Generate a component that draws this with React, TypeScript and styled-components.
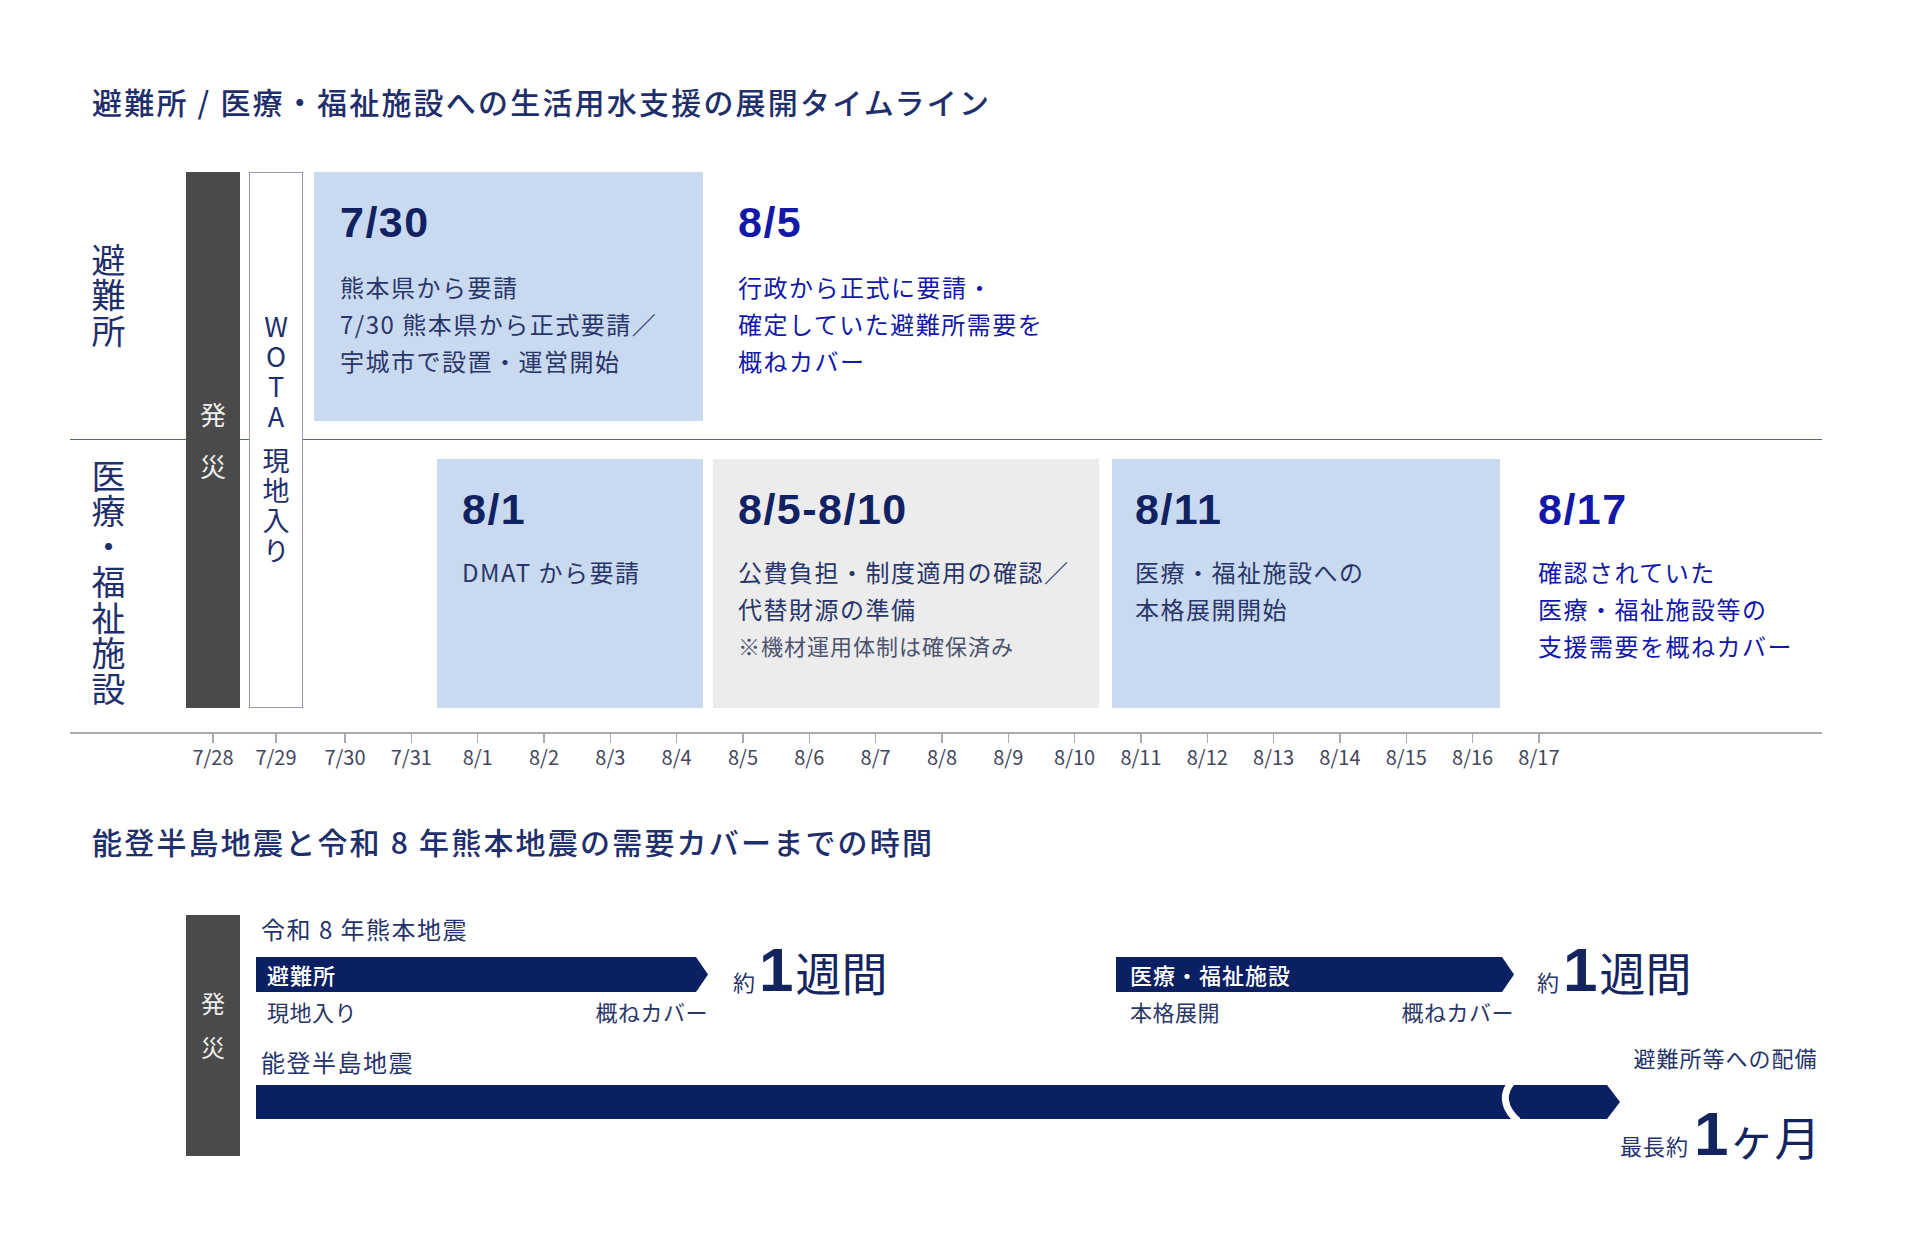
import React from "react";
import styled, { createGlobalStyle } from "styled-components";

const CJK = `"Noto Sans CJK JP", "Noto Sans", sans-serif`;
const LATIN_BOLD = `"Liberation Sans", Arial, sans-serif`;
const NAVY_BAR = "#0b1f63";
const NAVY_TEXT = "#1f2e68";
const BLUE_TEXT = "#1218a8";

const GlobalStyle = createGlobalStyle`
  html, body { margin: 0; padding: 0; background: #ffffff; }
  body { font-family: ${CJK}; color: ${NAVY_TEXT}; }
  #root { width: 1920px; height: 1251px; }
`;

const Page = styled.div`
  width: 1920px;
  height: 1251px;
  box-sizing: border-box;
  padding-top: 80px;
  overflow: hidden;
  background: #ffffff;
`;

const SectionTitle = styled.h2<{ $top: number }>`
  margin: ${(p) => p.$top}px 0 0 92px;
  font-family: ${CJK};
  font-size: 30px;
  line-height: 42px;
  font-weight: 500;
  letter-spacing: 2.2px;
  color: #1f2f6b;
  white-space: nowrap;
`;

/* ---------- Timeline chart ---------- */

const ChartGrid = styled.div`
  margin: 50px 0 0 70px;
  width: 1752px;
  display: grid;
  grid-template-columns: 116px 54px 9px 54px 11px 123px 266px 10px 386px 13px 388px 322px;
  grid-template-rows: 249px 18px 1px 19px 249px;
`;

const RowLabel = styled.div<{ $row: string }>`
  grid-column: 1 / 2;
  grid-row: ${(p) => p.$row};
  align-self: center;
  justify-self: start;
  margin-left: 21px;
  writing-mode: vertical-rl;
  text-orientation: upright;
  font-size: 34px;
  line-height: 34px;
  letter-spacing: 1.5px;
  color: #1f2f6b;
`;

const Divider = styled.div`
  grid-column: 1 / -1;
  grid-row: 3 / 4;
  background: #5d6391;
  height: 1px;
`;

const DisasterBar = styled.div<{ $pad?: number; $gap: number; $size: number }>`
  position: relative;
  z-index: 1;
  background: #4a4a4a;
  color: #eeeeee;
  display: flex;
  flex-direction: column;
  align-items: center;
  justify-content: center;
  gap: ${(p) => p.$gap}px;
  padding-bottom: ${(p) => p.$pad ?? 0}px;
  box-sizing: border-box;
  font-size: ${(p) => p.$size}px;
  line-height: ${(p) => p.$size}px;
`;

const TopDisasterBar = styled(DisasterBar)`
  grid-column: 2 / 3;
  grid-row: 1 / 6;
`;

const WotaBox = styled.div`
  position: relative;
  z-index: 1;
  grid-column: 4 / 5;
  grid-row: 1 / 6;
  background: #ffffff;
  border: 1.5px solid #9599b8;
  box-sizing: border-box;
  display: flex;
  flex-direction: column;
  align-items: center;
  justify-content: center;
  gap: 14px;
`;

const WotaText = styled.span<{ $pitch: number }>`
  writing-mode: vertical-rl;
  text-orientation: upright;
  font-size: 27px;
  line-height: 27px;
  letter-spacing: ${(p) => p.$pitch}px;
  color: #1f2f6b;
`;

type Tone = "blue" | "gray" | "plain";

const EventBox = styled.div<{ $col: string; $row: string; $tone: Tone; $padLeft: number }>`
  grid-column: ${(p) => p.$col};
  grid-row: ${(p) => p.$row};
  background: ${(p) => (p.$tone === "blue" ? "#c9d9ef" : p.$tone === "gray" ? "#ececec" : "transparent")};
  padding: 29px 0 0 ${(p) => p.$padLeft}px;
  box-sizing: border-box;
  white-space: nowrap;
`;

const EventDate = styled.div<{ $accent?: boolean }>`
  font-family: ${LATIN_BOLD};
  font-weight: 700;
  font-size: 43px;
  line-height: 43px;
  letter-spacing: 1.5px;
  color: ${(p) => (p.$accent ? BLUE_TEXT : "#102262")};
`;

const EventBody = styled.div<{ $accent?: boolean; $top: number }>`
  margin-top: ${(p) => p.$top}px;
  font-size: 24px;
  line-height: 37px;
  letter-spacing: 1.5px;
  color: ${(p) => (p.$accent ? BLUE_TEXT : "#29366a")};
`;

const EventNote = styled.div`
  margin-top: 3px;
  font-size: 22px;
  line-height: 30px;
  letter-spacing: 1px;
  color: #4d5370;
`;

const Axis = styled.div`
  position: relative;
  margin: 24px 0 0 70px;
  width: 1752px;
  height: 50px;
  border-top: 2px solid #a8a9b3;
`;

const Tick = styled.div`
  position: absolute;
  top: 0;
  width: 1.5px;
  height: 9px;
  background: #a8a9b3;
`;

const TickLabel = styled.div`
  position: absolute;
  top: 11px;
  transform: translateX(-50%);
  font-size: 20px;
  line-height: 24px;
  color: #43475e;
  white-space: nowrap;
`;

/* ---------- Comparison section ---------- */

const CompareGrid = styled.div`
  margin: 50px 0 0 186px;
  display: grid;
  grid-template-columns: 54px 16px 1566px;
`;

const CompareDisasterBar = styled(DisasterBar)`
  grid-column: 1 / 2;
  align-self: start;
  margin-top: 3px;
  height: 241px;
`;

const CompareContent = styled.div`
  grid-column: 3 / 4;
  display: flex;
  flex-direction: column;
`;

const QuakeLabel = styled.div<{ $top?: number }>`
  margin-top: ${(p) => p.$top ?? 0}px;
  padding-left: 5px;
  font-size: 24px;
  line-height: 34px;
  letter-spacing: 1.5px;
  color: #25336a;
  white-space: nowrap;
`;

const RowA = styled.div`
  margin-top: 11px;
  display: grid;
  grid-template-columns: 452px 408px 398px 1fr;
  align-items: start;
`;

const ArrowGroup = styled.div`
  display: flex;
  flex-direction: column;
`;

const ArrowBar = styled.div<{ $pad: number }>`
  height: 35px;
  background: ${NAVY_BAR};
  clip-path: polygon(0 0, calc(100% - 12px) 0, 100% 50%, calc(100% - 12px) 100%, 0 100%);
  color: #ffffff;
  font-size: 22px;
  line-height: 35px;
  font-weight: 500;
  letter-spacing: 1px;
  padding-left: ${(p) => p.$pad}px;
  white-space: nowrap;
`;

const SubLabels = styled.div<{ $pad: number }>`
  margin-top: 4px;
  display: flex;
  justify-content: space-between;
  padding-left: ${(p) => p.$pad}px;
  font-size: 22px;
  line-height: 30px;
  letter-spacing: 0.5px;
  color: #2a3668;
  white-space: nowrap;
`;

const ValueCell = styled.div<{ $pad: number }>`
  padding-left: ${(p) => p.$pad}px;
  margin-top: -18px;
`;

const Value = styled.div<{ $top?: number }>`
  display: flex;
  align-items: baseline;
  margin-top: ${(p) => p.$top ?? 0}px;
  font-family: ${LATIN_BOLD};
  font-size: 62px;
  line-height: 62px;
  color: #14245e;
  white-space: nowrap;
`;

const ValueSmall = styled.span`
  font-family: ${CJK};
  font-size: 22px;
  line-height: 22px;
  letter-spacing: 1px;
  color: #25336a;
`;

const ValueBig = styled.span<{ $gap: number }>`
  margin-left: ${(p) => p.$gap}px;
  font-family: ${LATIN_BOLD};
  font-weight: 700;
  font-size: 62px;
  line-height: 62px;
`;

const ValueUnit = styled.span<{ $gap: number }>`
  margin-left: ${(p) => p.$gap}px;
  font-family: ${CJK};
  font-size: 46px;
  line-height: 46px;
`;

const RowB = styled.div`
  margin-top: 16px;
  display: grid;
  grid-template-columns: 1364px 1fr;
  align-items: start;
`;

const LongBarCell = styled.div`
  display: flex;
  flex-direction: column;
`;

const LongBarSvg = styled.svg`
  display: block;
  margin-top: 6px;
`;

const RightNote = styled.div`
  display: flex;
  flex-direction: column;
  align-items: flex-end;
  padding-right: 8px;
`;

const DeployLabel = styled.div`
  font-size: 22px;
  line-height: 30px;
  letter-spacing: 1px;
  color: #25336a;
  white-space: nowrap;
`;

const MonthValue = styled(Value)`
  margin-right: -3px;
`;

/* ---------- Data ---------- */

const dayLabels = [
  "7/30", "7/31", "8/1", "8/2", "8/3", "8/4", "8/5", "8/6", "8/7", "8/8",
  "8/9", "8/10", "8/11", "8/12", "8/13", "8/14", "8/15", "8/16", "8/17",
];

const ticks = [
  { label: "7/28", x: 213 },
  { label: "7/29", x: 276 },
  ...dayLabels.map((label, i) => ({ label, x: 345 + i * 66.33 })),
];

const AXIS_LEFT = 70;

const LongBar: React.FC = () => (
  <LongBarSvg width={1364} height={34} viewBox="0 0 1364 34">
    <path d="M0 0 H1351 L1364 17 L1351 34 H0 Z" fill={NAVY_BAR} />
    <path d="M1255 -2 C1247 8 1246 22 1262 36" stroke="#ffffff" strokeWidth={7} fill="none" />
  </LongBarSvg>
);

export default function App() {
  return (
    <Page>
      <GlobalStyle />
      <SectionTitle $top={0}>避難所 / 医療・福祉施設への生活用水支援の展開タイムライン</SectionTitle>

      <ChartGrid>
        <RowLabel $row="1 / 2">避難所</RowLabel>
        <RowLabel $row="5 / 6">医療・福祉施設</RowLabel>
        <Divider />
        <TopDisasterBar $gap={26} $size={26}>
          <span>発</span>
          <span>災</span>
        </TopDisasterBar>
        <WotaBox>
          <WotaText $pitch={3}>WOTA</WotaText>
          <WotaText $pitch={3}>現地入り</WotaText>
        </WotaBox>

        <EventBox $col="6 / 8" $row="1 / 2" $tone="blue" $padLeft={26}>
          <EventDate>7/30</EventDate>
          <EventBody $top={24}>
            熊本県から要請
            <br />
            7/30 熊本県から正式要請／
            <br />
            宇城市で設置・運営開始
          </EventBody>
        </EventBox>

        <EventBox $col="8 / 13" $row="1 / 2" $tone="plain" $padLeft={35}>
          <EventDate $accent>8/5</EventDate>
          <EventBody $accent $top={24}>
            行政から正式に要請・
            <br />
            確定していた避難所需要を
            <br />
            概ねカバー
          </EventBody>
        </EventBox>

        <EventBox $col="7 / 8" $row="5 / 6" $tone="blue" $padLeft={25}>
          <EventDate>8/1</EventDate>
          <EventBody $top={22}>DMAT から要請</EventBody>
        </EventBox>

        <EventBox $col="9 / 10" $row="5 / 6" $tone="gray" $padLeft={25}>
          <EventDate>8/5-8/10</EventDate>
          <EventBody $top={22}>
            公費負担・制度適用の確認／
            <br />
            代替財源の準備
          </EventBody>
          <EventNote>※機材運用体制は確保済み</EventNote>
        </EventBox>

        <EventBox $col="11 / 12" $row="5 / 6" $tone="blue" $padLeft={23}>
          <EventDate>8/11</EventDate>
          <EventBody $top={22}>
            医療・福祉施設への
            <br />
            本格展開開始
          </EventBody>
        </EventBox>

        <EventBox $col="12 / 13" $row="5 / 6" $tone="plain" $padLeft={38}>
          <EventDate $accent>8/17</EventDate>
          <EventBody $accent $top={22}>
            確認されていた
            <br />
            医療・福祉施設等の
            <br />
            支援需要を概ねカバー
          </EventBody>
        </EventBox>
      </ChartGrid>

      <Axis>
        {ticks.map((t) => (
          <React.Fragment key={t.label}>
            <Tick style={{ left: t.x - AXIS_LEFT - 0.75 }} />
            <TickLabel style={{ left: t.x - AXIS_LEFT }}>{t.label}</TickLabel>
          </React.Fragment>
        ))}
      </Axis>

      <SectionTitle $top={36}>能登半島地震と令和 8 年熊本地震の需要カバーまでの時間</SectionTitle>

      <CompareGrid>
        <CompareDisasterBar $gap={20} $size={24} $pad={22}>
          <span>発</span>
          <span>災</span>
        </CompareDisasterBar>

        <CompareContent>
          <QuakeLabel>令和 8 年熊本地震</QuakeLabel>
          <RowA>
            <ArrowGroup>
              <ArrowBar $pad={11}>避難所</ArrowBar>
              <SubLabels $pad={11}>
                <span>現地入り</span>
                <span>概ねカバー</span>
              </SubLabels>
            </ArrowGroup>
            <ValueCell $pad={25}>
              <Value>
                <ValueSmall>約</ValueSmall>
                <ValueBig $gap={3}>1</ValueBig>
                <ValueUnit $gap={2}>週間</ValueUnit>
              </Value>
            </ValueCell>
            <ArrowGroup>
              <ArrowBar $pad={14}>医療・福祉施設</ArrowBar>
              <SubLabels $pad={14}>
                <span>本格展開</span>
                <span>概ねカバー</span>
              </SubLabels>
            </ArrowGroup>
            <ValueCell $pad={23}>
              <Value>
                <ValueSmall>約</ValueSmall>
                <ValueBig $gap={3}>1</ValueBig>
                <ValueUnit $gap={2}>週間</ValueUnit>
              </Value>
            </ValueCell>
          </RowA>

          <RowB>
            <LongBarCell>
              <QuakeLabel $top={3}>能登半島地震</QuakeLabel>
              <LongBar />
            </LongBarCell>
            <RightNote>
              <DeployLabel>避難所等への配備</DeployLabel>
              <MonthValue $top={31}>
                <ValueSmall>最長約</ValueSmall>
                <ValueBig $gap={5}>1</ValueBig>
                <ValueUnit $gap={0}>ヶ月</ValueUnit>
              </MonthValue>
            </RightNote>
          </RowB>
        </CompareContent>
      </CompareGrid>
    </Page>
  );
}
